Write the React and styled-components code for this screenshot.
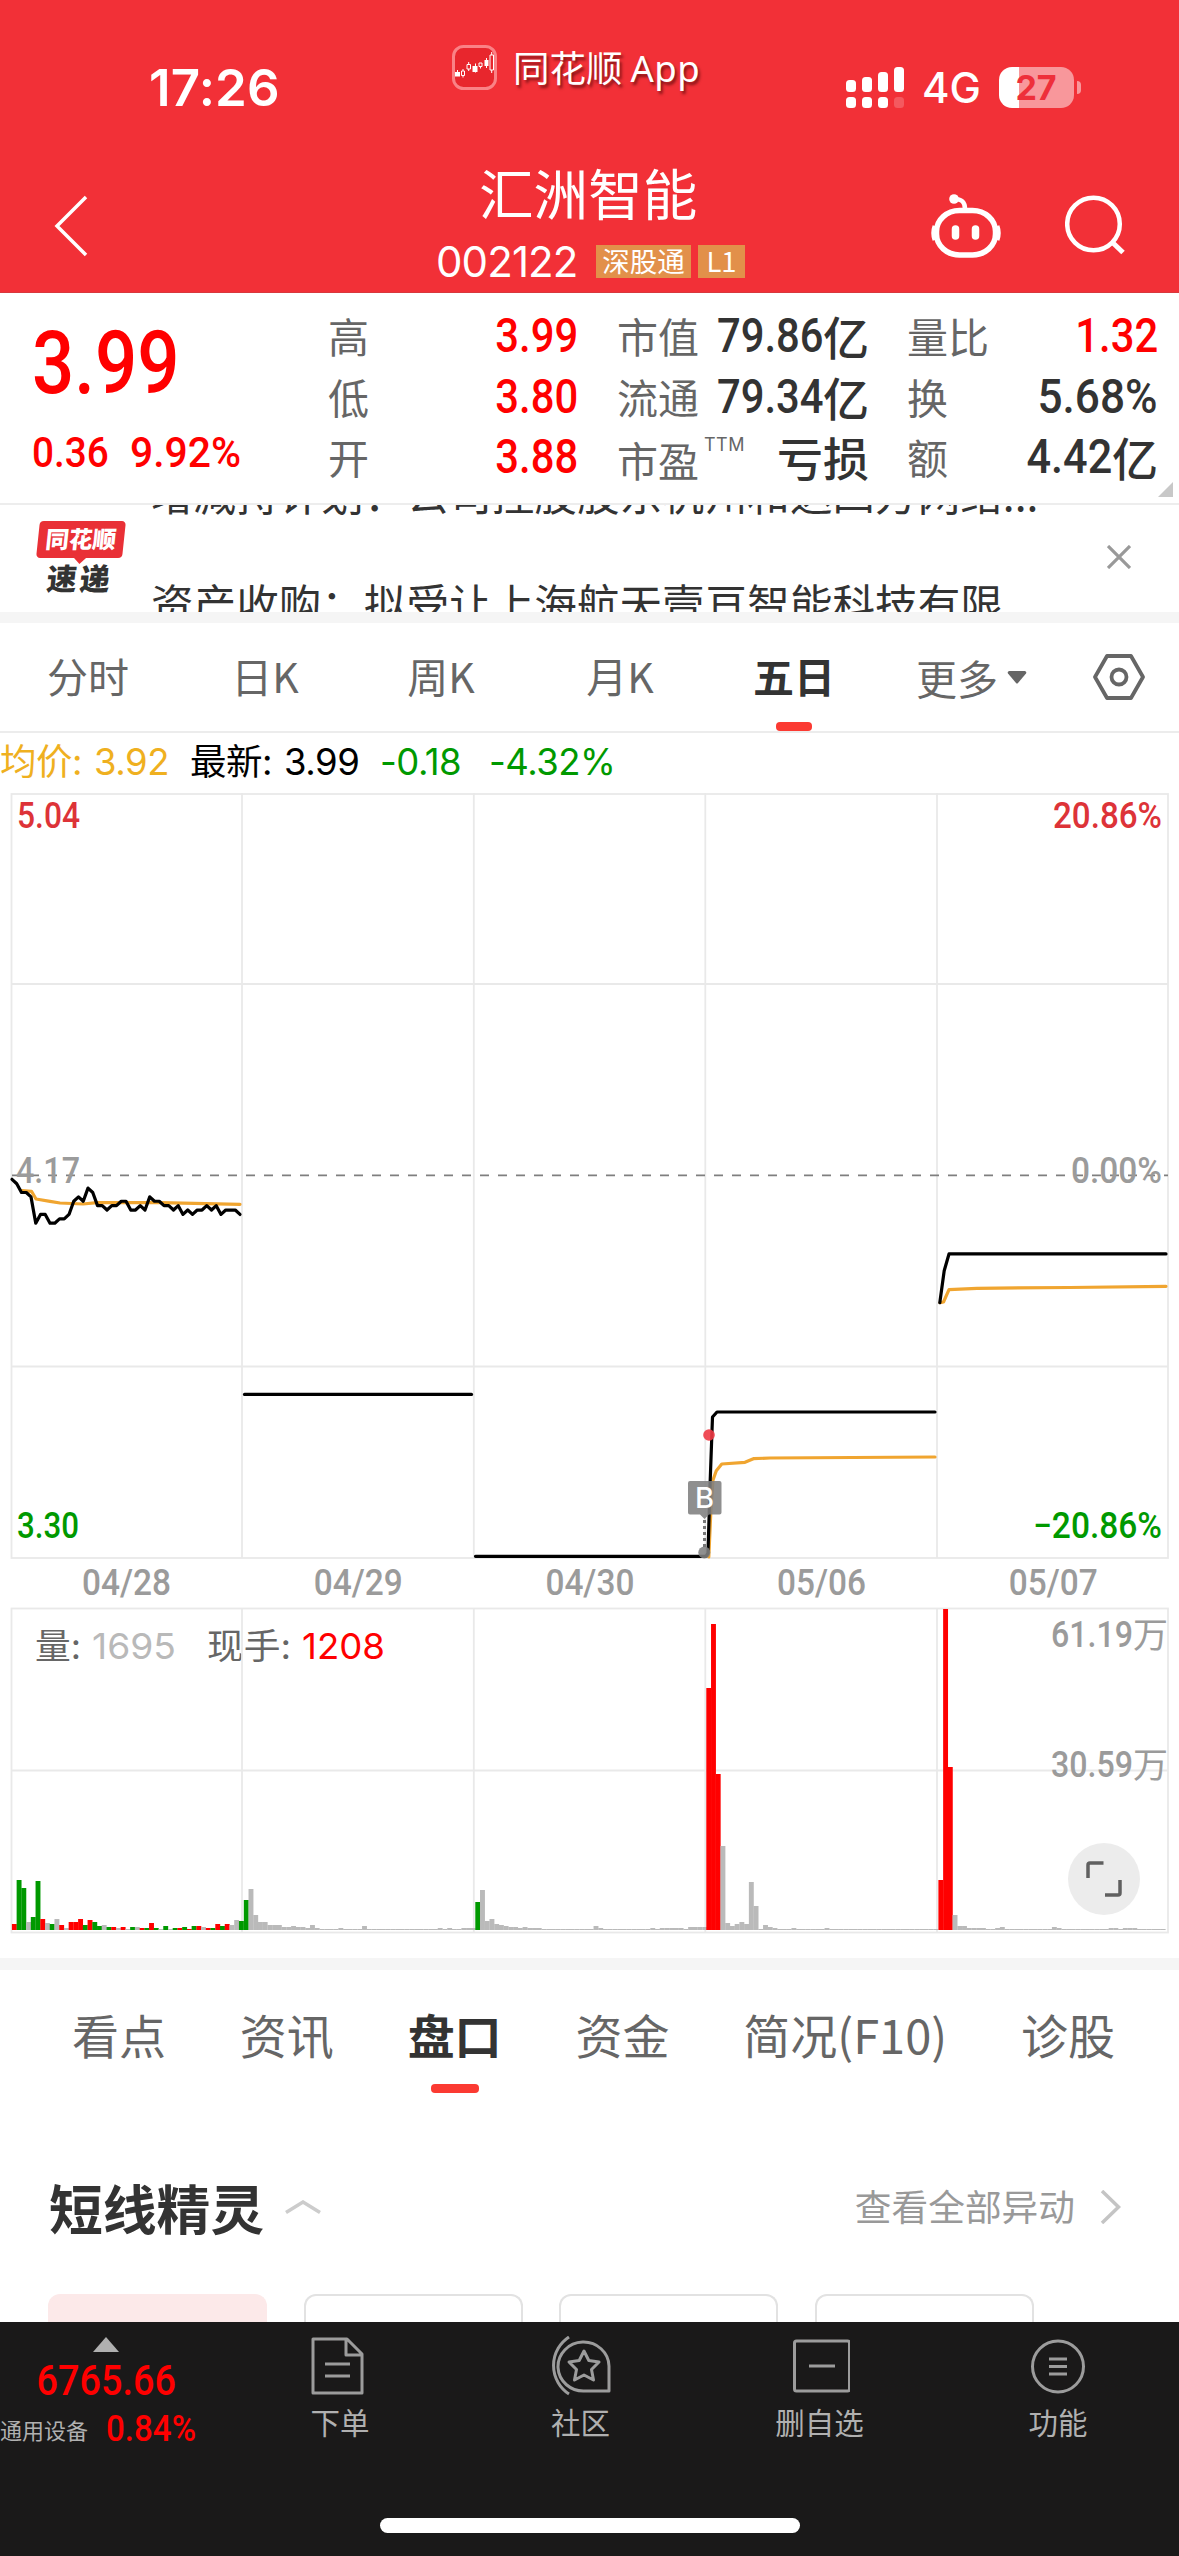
import React, { useState } from 'react'
import styled, { createGlobalStyle } from 'styled-components'

const RED = '#ff0000'
const GREEN = '#009900'
const AVG = '#f0a530'

const periods = [
  { name: '分时', left: 47, width: 82 },
  { name: '日K', left: 230, width: 70 },
  { name: '周K', left: 405, width: 72 },
  { name: '月K', left: 584, width: 72 },
  { name: '五日', left: 753, width: 82 },
]

const sections = ['看点', '资讯', '盘口', '资金', '简况(F10)', '诊股']

// one value for every 5 minutes, in cents
const firstDay = [
  416, 415, 413, 413, 412, 406, 408, 408, 406, 406, 407, 407, 408, 411, 412, 411, 414, 413, 410, 410,
  409, 410, 410, 411, 411, 409, 409, 410, 409, 412, 411, 411, 410, 410, 409, 410, 408, 409, 408, 409,
  409, 410, 409, 410, 408, 409, 409, 409, 408,
]

// r = up, g = down, n = flat
const volumes = [
  {
    x: 11.9,
    bars: 'r6 g50 g42 n8 g13 g49 r11 n7 g6 n11 r5 n2 r8 r8 r11 g5 r10 g8 g4 n5 g3 r3 n2 r3 n1 g3 n3 r2 g2 r7 g2 n1 g4 n1 g2 r2 g3 r1 g4 r4 n3 r2 g2 r6 g4 r6 n5 n10 g9',
  },
  {
    x: 243.8,
    bars: 'g30 n41 n15 n8 n8 n5 n5 n5 n3 n3 n4 n3 n3 n2 n5 n2 n1 n1 n1 n1 n2 n1 n1 n1 n1 n4 n1 n1 n1 n1 n1 n1 n1 n1 n1 n1 n1 n1 n1 n1 n1 n2 n1 n2 n1 n1 n2 n2 n2',
  },
  {
    x: 475.3,
    bars: 'g28 n40 n9 n11 n6 n5 n4 n3 n3 n2 n3 n2 n2 n2 n1 n1 n1 n1 n1 n1 n1 n1 n1 n1 n1 n4 n2 n1 n1 n1 n1 n1 n1 n1 n1 n1 n1 n2 n1 n2 n2 n2 n2 n2 n1 n3 n3 n3 n3',
  },
  {
    x: 706.3,
    bars: 'r242 r306 r156 n84 n7 n4 n6 n8 n6 n48 n24 n1 n5 n3 n2 n1 n1 n1 n2 n1 n1 n1 n1 n1 n1 n2 n1 n1 n1 n1 n1 n1 n1 n1 n1 n1 n1 n1 n1 n1 n1 n1 n1 n1 n1 n1 n1 n1 n1',
  },
  {
    x: 938.4,
    bars: 'r50 r321 r163 n15 n4 n4 n2 n2 n2 n2 n1 n1 n2 n3 n1 n1 n1 n1 n1 n1 n1 n1 n1 n1 n3 n2 n1 n1 n1 n1 n1 n1 n1 n1 n1 n1 n2 n2 n1 n2 n2 n2 n1 n1 n1 n1 n1 n1',
  },
]

const barColors = { r: RED, g: GREEN, n: '#bababa' }
const dates = ['04/28', '04/29', '04/30', '05/06', '05/07']
const dayLines = [242, 473.8, 705.3, 937]
const priceY = (cents) => (504 - cents) * 4.39

function PriceChart() {
  const first = firstDay.map((p, i) => `${12 + i * 4.75},${priceY(p)}`).join(' ')
  return (
    <ChartSvg viewBox="0 0 1179 810" height="810">
      <g stroke="#e9e9e9" strokeWidth="1.8" fill="none">
        <rect x="11.5" y="1" width="1156.5" height="764" />
        <path d="M11 191H1168M11 573.5H1168" />
        {dayLines.map((x) => <path key={x} d={`M${x} 0V765`} />)}
      </g>
      <path d="M12 382.3H1168" stroke="#7f7f7f" strokeWidth="1.8" strokeDasharray="9 9" />

      <AxisText x="17" y="35" textLength="63" fill="#dd3338">5.04</AxisText>
      <AxisText x="1053" y="35" textLength="109" fill="#dd3338">20.86%</AxisText>
      <AxisText x="16" y="389.5" textLength="64" fill="#9b9b9b">4.17</AxisText>
      <AxisText x="1071" y="389.5" textLength="91" fill="#9b9b9b">0.00%</AxisText>
      <AxisText x="17" y="744.5" textLength="62" fill={GREEN}>3.30</AxisText>
      <AxisText x="1033" y="744.5" textLength="129" fill={GREEN}>−20.86%</AxisText>

      <g fill="none" strokeWidth="3.2" strokeLinejoin="round" strokeLinecap="round">
        <g stroke={AVG}>
          <path d="M22 397.7L31.5 398.3L36 406L50 408.3L60 410L83 411L97 409.7H160L240 411.3" />
          <path d="M708.8 764L711 715L713 687L716.3 677.7L721.8 671L745 669.3L753.4 665.7L770 665L935 664" />
          <path d="M940 509.7L943.5 509L949 496.7L977 495.3L1070 494.5L1166 493.3" />
        </g>
        <g stroke="#000">
          <polyline points={first} />
          <path d={`M244.5 ${priceY(367)}H471.5`} />
          <path d={`M475.5 ${priceY(330) - 0.5}H706L708 760L710 693L712.5 624L717 ${priceY(363)}H935`} />
          <path d={`M939.8 509.7L944.2 477.7L949 ${priceY(399)}H1166`} />
        </g>
      </g>

      <circle cx="709" cy="642" r="5.8" fill="#ee3a45" opacity="0.9" />
      <g fill="#808080" fillOpacity="0.88">
        <path d="M690 688H719.5Q721.5 688 721.5 690V719.5Q721.5 721.5 719.5 721.5H709L704.5 726L700 721.5H690Q688 721.5 688 719.5V690Q688 688 690 688Z" />
        <circle cx="704.3" cy="759.5" r="6" />
      </g>
      <path d="M704.5 727V754" stroke="#777" strokeWidth="3" strokeDasharray="3 3" />
      <MarkText x="704.5" y="715">B</MarkText>

      {dates.map((d, i) => (
        <AxisText key={d} x={82 + i * 231.7} y="801.5" textLength="89" fill="#9b9b9b">{d}</AxisText>
      ))}
    </ChartSvg>
  )
}

function VolumeChart() {
  return (
    <ChartSvg viewBox="0 0 1179 355" height="355">
      <g stroke="#e9e9e9" strokeWidth="1.8" fill="none">
        <rect x="11.5" y="5.5" width="1156.5" height="324" />
        <path d="M11 167.5H1168" />
      </g>
      <LegendText x="35" y="56" textLength="46" fill="#666">量:</LegendText>
      <LegendText x="92" y="56" textLength="84" fill="#b9b9b9">1695</LegendText>
      <LegendText x="207" y="56" textLength="84" fill="#666">现手:</LegendText>
      <LegendText x="302" y="56" textLength="83" fill={RED}>1208</LegendText>
      <g stroke="#e9e9e9" strokeWidth="1.8">
        {dayLines.map((x) => <path key={x} d={`M${x} 5V330`} />)}
      </g>
      {volumes.map((day) =>
        day.bars.split(' ').map((bar, i) => {
          const h = Number(bar.slice(1))
          return (
            <rect
              key={`${day.x}-${i}`}
              x={day.x + i * 4.73}
              y={327 - h}
              width="4.9"
              height={h}
              fill={barColors[bar[0]]}
            />
          )
        })
      )}
      <AxisText x="1051" y="44" textLength="82" fill="#9b9b9b">61.19</AxisText>
      <UnitText x="1133" y="45" fill="#9b9b9b">万</UnitText>
      <AxisText x="1051" y="174" textLength="82" fill="#9b9b9b">30.59</AxisText>
      <UnitText x="1133" y="175" fill="#9b9b9b">万</UnitText>
    </ChartSvg>
  )
}

function StatusBar() {
  return (
    <Status>
      <Clock>17:26</Clock>
      <AppMark>
        <svg width="45" height="45" viewBox="0 0 45 45">
          <rect x="1.5" y="1.5" width="42" height="42" rx="10" fill="#e8262d" stroke="#fa8286" strokeWidth="3" />
          <g fill="#fff">
            <rect x="3" y="27" width="5" height="4.5" />
            <path d="M5 25h1v2h-1zM23 18.5h1v9h-1zM34 13h1v10h-1z" />
            <rect x="20.5" y="21" width="5" height="6" />
            <rect x="32.5" y="15" width="4" height="6" />
          </g>
          <g fill="none" stroke="#fff" strokeWidth="1">
            <path d="M9.5 26h3v4.5h-3zM11 24v2M11 30.5v2M15 19.5h3.5v4.5h-3.5zM16.7 17v2.5M16.7 24v2M27 18h3v3.5h-3zM28.5 21.5v2M38 10h3.5v15h-3.5zM39.7 7v3M39.7 25v3" />
          </g>
        </svg>
        <AppName>同花顺<span>App</span></AppName>
      </AppMark>
      <Signal>
        <svg width="58" height="41" viewBox="0 0 58 41" fill="#fff">
          <rect x="0" y="13" width="10" height="12" rx="3.5" />
          <rect x="16" y="10" width="10" height="15" rx="3.5" />
          <rect x="32" y="5" width="10" height="20" rx="3.5" />
          <rect x="48" y="0" width="10" height="25" rx="3.5" />
          <rect x="0" y="30" width="10" height="11" rx="3.5" />
          <rect x="16" y="30" width="10" height="11" rx="3.5" />
          <rect x="32" y="30" width="10" height="11" rx="3.5" />
          <rect x="48" y="30" width="10" height="11" rx="3.5" opacity="0.2" />
        </svg>
        <Network>4G</Network>
        <Battery>27</Battery>
        <BatteryTip />
      </Signal>
    </Status>
  )
}

function NavBar() {
  return (
    <Nav>
      <svg width="36" height="62" viewBox="0 0 36 62" fill="none" stroke="#fff" strokeWidth="3.5">
        <path d="M34 2L5 31L34 60" />
      </svg>
      <Title>
        <h1>汇洲智能</h1>
        <CodeRow>
          <Code>002122</Code>
          <Tag $width={95}>深股通</Tag>
          <Tag $width={47}>L1</Tag>
        </CodeRow>
      </Title>
      <NavIcons>
        <svg width="70" height="64" viewBox="0 0 70 64" fill="none" stroke="#fff" strokeWidth="5">
          <rect x="5.5" y="16.5" width="59" height="44.5" rx="23" ry="21" strokeWidth="5.5" />
          <path d="M23 5C31 5 34 8 34 15" strokeWidth="4.5" />
          <circle cx="23" cy="5" r="4.8" fill="#fff" stroke="none" />
          <path d="M4 32Q1.5 39 4 46M66 32Q68.5 39 66 46" strokeWidth="5" />
          <path d="M24.5 35V42M44.5 35V42" strokeWidth="7.5" strokeLinecap="round" />
        </svg>
        <svg width="62" height="62" viewBox="0 0 62 62" fill="none" stroke="#fff" strokeWidth="4.5">
          <circle cx="28.5" cy="30" r="26.3" />
          <path d="M47 48L58 58.5" strokeWidth="5" />
        </svg>
      </NavIcons>
    </Nav>
  )
}

function Quote() {
  return (
    <QuotePanel>
      <Last>
        <Din $size={87} $squeeze={0.855} $color={RED}>3.99</Din>
        <Change>
          <Din $size={43} $squeeze={0.9} $color={RED}>0.36</Din>
          <Din $size={43} $squeeze={0.95} $color={RED}>9.92%</Din>
        </Change>
      </Last>
      <StatColumn $width={250}>
        <Stat>高<Din $end $color={RED}>3.99</Din></Stat>
        <Stat>低<Din $end $color={RED}>3.80</Din></Stat>
        <Stat>开<Din $end $color={RED}>3.88</Din></Stat>
      </StatColumn>
      <StatColumn $width={252} $left={39}>
        <Stat>市值<Value><Din $end>79.86</Din>亿</Value></Stat>
        <Stat>流通<Value><Din $end>79.34</Din>亿</Value></Stat>
        <Stat><Pe>市盈<sup>TTM</sup></Pe><Value>亏损</Value></Stat>
      </StatColumn>
      <StatColumn $width={251} $left={38}>
        <Stat>量比<Din $end $color={RED}>1.32</Din></Stat>
        <Stat>换<Din $end $squeeze={0.92}>5.68%</Din></Stat>
        <Stat>额<Value><Din $end $squeeze={0.9}>4.42</Din>亿</Value></Stat>
      </StatColumn>
      <Corner />
    </QuotePanel>
  )
}

function News() {
  return (
    <NewsBar>
      <Express>
        <ExpressBadge><b>同花顺</b></ExpressBadge>
        <ExpressName>速递</ExpressName>
      </Express>
      <Ticker>
        <p>增减持计划：公司控股股东杭州和达四方网络...</p>
        <p>资产收购：拟受让上海航天壹亘智能科技有限</p>
      </Ticker>
      <svg width="24" height="24" viewBox="0 0 24 24" stroke="#999" strokeWidth="3.2">
        <path d="M1 1L23 23M23 1L1 23" />
      </svg>
    </NewsBar>
  )
}

function BottomBar() {
  return (
    <Bottom>
      <Index>
        <svg width="26" height="15" viewBox="0 0 26 15" fill="#b0b0b0"><path d="M13 0L26 15H0Z" /></svg>
        <Din $size={42.5} $squeeze={0.89} $center $color={RED}>6765.66</Din>
        <IndexRow>
          通用设备
          <Din $size={36} $squeeze={0.92} $color={RED}>0.84%</Din>
        </IndexRow>
      </Index>
      <Action $center={340}>
        <svg width="60" height="60" viewBox="0 0 60 60">
          <path d="M3 3H37L52 18V57H3ZM36 3V19H52M15 28H40M15 40H40" />
        </svg>
        下单
      </Action>
      <Action $center={580.5}>
        <svg width="60" height="60" viewBox="0 0 60 60">
          <path d="M58 55H34A25.5 24.5 0 1 1 58 30ZM18 1A34 34 0 0 0 18 58" />
          <path d="M33 15L37.8 24.5L48 26L40.5 33.5L42.5 44L33 39L23.5 44L25.5 33.5L18 26L28.2 24.5Z" />
        </svg>
        社区
      </Action>
      <Action $center={819.5}>
        <svg width="60" height="60" viewBox="0 0 60 60">
          <rect x="4.5" y="5" width="55" height="50" rx="2" />
          <path d="M19 30H45" />
        </svg>
        删自选
      </Action>
      <Action $center={1058}>
        <svg width="60" height="60" viewBox="0 0 60 60">
          <circle cx="30" cy="30.5" r="25.5" />
          <path d="M21 23H39M21 30.5H39M21 38H39" />
        </svg>
        功能
      </Action>
      <HomeIndicator />
    </Bottom>
  )
}

function App() {
  const [period, setPeriod] = useState('五日')
  const [section, setSection] = useState('盘口')

  return (
    <Page>
      <GlobalStyle />
      <Header>
        <StatusBar />
        <NavBar />
      </Header>
      <Quote />
      <News />
      <Band $height={11} />
      <Periods>
        {periods.map((p, i) => {
          const prev = periods[i - 1]
          return (
            <Period
              key={p.name}
              $gap={prev ? p.left - prev.left - prev.width : p.left}
              $width={p.width}
              $active={p.name === period}
              onClick={() => setPeriod(p.name)}
            >
              {p.name}
            </Period>
          )
        })}
        <More>
          更多
          <svg width="20" height="13" viewBox="0 0 20 13" fill="#666"><path d="M2 0H18Q20 1 19 2.5L11 12Q10 13 9 12L1 2.5Q0 1 2 0Z" /></svg>
        </More>
        <svg width="52" height="46" viewBox="0 0 52 46" fill="none" stroke="#666" strokeWidth="3.8" strokeLinejoin="round">
          <path d="M14 2H38L50 23L38 44H14L2 23Z" />
          <circle cx="26" cy="23" r="7.5" />
        </svg>
      </Periods>
      <Info>
        <InfoItem $width={94} $color="#efb01f">均价:</InfoItem>
        <InfoItem $width={96} $color="#efb01f">3.92</InfoItem>
        <InfoItem $width={94} $color="#000">最新:</InfoItem>
        <InfoItem $width={96} $color="#000">3.99</InfoItem>
        <InfoItem $width={109} $color={GREEN}>-0.18</InfoItem>
        <InfoItem $width={130} $color={GREEN}>-4.32%</InfoItem>
      </Info>
      <PriceChart />
      <VolumeArea>
        <VolumeChart />
        <Expand>
          <svg width="36" height="36" viewBox="0 0 36 36" fill="none" stroke="#606060" strokeWidth="3.5">
            <path d="M17.5 2H4Q2 2 2 4V17M19 34H32Q34 34 34 32V19" />
          </svg>
        </Expand>
      </VolumeArea>
      <Band $height={12} />
      <Sections>
        {sections.map((s) => (
          <Section key={s} $active={s === section} onClick={() => setSection(s)}>{s}</Section>
        ))}
      </Sections>
      <Heading>
        <h2>短线精灵</h2>
        <svg width="36" height="14" viewBox="0 0 36 14" fill="none" stroke="#ccc" strokeWidth="3.5"><path d="M1 12.5L18 2L35 12.5" /></svg>
        <AllLink>查看全部异动</AllLink>
        <svg width="22" height="34" viewBox="0 0 22 34" fill="none" stroke="#c4c4c4" strokeWidth="3.5"><path d="M2 1L18.5 17L2 33" /></svg>
      </Heading>
      <Cards>
        <Card $active />
        <Card />
        <Card />
        <Card />
      </Cards>
      <BottomBar />
    </Page>
  )
}

export default App

const GlobalStyle = createGlobalStyle`
  * {
    box-sizing: border-box;
  }
  body {
    margin: 0;
    background: #fff;
  }
  h1, h2, p {
    margin: 0;
    font-weight: 400;
  }
  svg {
    display: block;
    flex-shrink: 0;
  }
`

const Page = styled.div`
  width: 1179px;
  height: 2556px;
  overflow: hidden;
  display: flex;
  flex-direction: column;
  font-family: "Noto Sans CJK SC", sans-serif;
  color: #333;
  white-space: nowrap;

  > * {
    flex-shrink: 0;
  }
`

const Din = styled.span`
  display: inline-block;
  font-family: Roboto, sans-serif;
  font-weight: 500;
  font-size: ${(p) => p.$size || 48}px;
  line-height: 1;
  color: ${(p) => p.$color || '#333'};
  transform: scaleX(${(p) => p.$squeeze || 0.87});
  transform-origin: ${(p) => (p.$end ? 'right' : p.$center ? 'center' : 'left')};
`

const Header = styled.header`
  height: 293px;
  background: #f23037;
  border-bottom: 1px solid #d8383d;
  color: #fff;
`

const Status = styled.div`
  height: 160px;
  display: flex;
  align-items: flex-start;
`

const Clock = styled.div`
  width: 301px;
  margin-top: 63px;
  padding-left: 149px;
  font: 600 51px/50px Inter, sans-serif;
  letter-spacing: 0.2px;
`

const AppMark = styled.div`
  width: 394px;
  margin: 45px 0 0 151px;
  display: flex;
  gap: 16px;
`

const AppName = styled.div`
  font-size: 36.5px;
  line-height: 43px;
  text-shadow: 2px 3px 3px rgba(60, 0, 0, 0.6);

  span {
    margin-left: 8px;
    font-family: "Noto Sans", sans-serif;
    letter-spacing: 0.5px;
  }
`

const Signal = styled.div`
  margin-top: 67px;
  display: flex;
  align-items: center;
`

const Network = styled.div`
  width: 77px;
  margin-left: 18px;
  font: 500 42px/41px Inter, sans-serif;
`

const Battery = styled.div`
  width: 75px;
  height: 41px;
  border-radius: 13px;
  background: linear-gradient(90deg, #fff 20px, #f8979b 20px);
  color: #ee2f3a;
  font: 700 34px/42px Inter, sans-serif;
  text-align: center;
  padding-right: 1px;
`

const BatteryTip = styled.div`
  width: 4px;
  height: 13px;
  margin-left: 3px;
  border-radius: 0 8px 8px 0;
  background: #f8979b;
`

const Nav = styled.nav`
  height: 132px;
  padding: 4px 53px 0 52px;
  display: grid;
  grid-template-columns: 290px 1fr 195px;

  > svg {
    margin-top: 31px;
  }
`

const Title = styled.div`
  padding-left: 94px;

  h1 {
    padding-left: 43px;
    font-size: 54.6px;
    line-height: 54px;
    margin-top: 1px;
  }
`

const CodeRow = styled.div`
  margin-top: 26px;
  height: 33px;
  display: flex;
  align-items: center;
  gap: 7px;
`

const Code = styled.div`
  width: 153px;
  font: 400 42px/33px Inter, sans-serif;
  letter-spacing: -0.9px;
`

const Tag = styled.div`
  width: ${(p) => p.$width}px;
  height: 33px;
  background: #e2904a;
  font-size: 27.5px;
  line-height: 30px;
  text-align: center;
`

const NavIcons = styled.div`
  display: flex;
  gap: 64px;
  padding-top: 30px;
`

const QuotePanel = styled.section`
  height: 212px;
  border-bottom: 2px solid #ededed;
  display: flex;
  position: relative;
`

const Last = styled.div`
  width: 328px;
  padding: 27px 0 0 32px;
`

const Change = styled.div`
  display: flex;
  gap: 13px;
  margin-top: 24px;
`

const StatColumn = styled.div`
  width: ${(p) => p.$width}px;
  margin-left: ${(p) => p.$left || 0}px;
  padding-top: 12px;
`

const Stat = styled.div`
  height: 60.5px;
  display: flex;
  align-items: center;
  justify-content: space-between;
  color: #666;
  font-size: 41px;
  line-height: 60px;

  ${Din} {
    margin-top: 2px;
  }
`

const Value = styled.span`
  display: flex;
  align-items: center;
  color: #333;
  font-size: 46px;
  font-weight: 500;
  line-height: 58px;
`

const Pe = styled.span`
  display: flex;
  padding-top: 6px;

  sup {
    margin-left: 5px;
    font: 400 18px/20px Inter, sans-serif;
    letter-spacing: 0.5px;
    padding-top: 6px;
  }
`

const Corner = styled.div`
  position: absolute;
  right: 6px;
  bottom: 6px;
  border-left: 15px solid transparent;
  border-bottom: 15px solid #c8c8c8;
`

const NewsBar = styled.section`
  height: 107px;
  padding: 0 48px 4px 0;
  display: flex;
  align-items: center;
  overflow: hidden;
`

const Express = styled.div`
  width: 151px;
  padding-left: 38px;
`

const ExpressBadge = styled.div`
  width: 86px;
  height: 37px;
  border-radius: 4px;
  background: #e93036;
  color: #fff;
  transform: skewX(-6deg);
  text-align: center;
  font-size: 23.5px;
  line-height: 35px;
  position: relative;

  b {
    font-weight: 900;
  }

  &::after {
    content: "";
    position: absolute;
    left: 38px;
    top: 37px;
    border: 6px solid transparent;
    border-top-color: #e93036;
    border-bottom: 0;
  }
`

const ExpressName = styled.div`
  margin: 4px 0 0 9px;
  font-size: 30px;
  font-weight: 900;
  line-height: 30px;
  letter-spacing: 3px;
  transform: skewX(-6deg);
`

const Ticker = styled.div`
  flex: 1;
  align-self: flex-start;
  margin-top: -34px;
  font-size: 42.6px;

  p {
    line-height: 43px;
    margin-bottom: 66px;
  }
`

const Band = styled.div`
  height: ${(p) => p.$height}px;
  background: #f5f5f5;
`

const Periods = styled.nav`
  height: 110px;
  border-bottom: 2px solid #ececec;
  display: flex;
  align-items: center;
  font-size: 41px;
  color: #666;
`

const underline = (width) => `
  content: "";
  position: absolute;
  bottom: 0;
  left: 50%;
  width: ${width}px;
  margin-left: -${width / 2}px;
  height: 9px;
  border-radius: 4px;
  background: #fb3a32;
`

const Period = styled.div`
  width: ${(p) => p.$width}px;
  height: 108px;
  margin-left: ${(p) => p.$gap}px;
  line-height: 104px;
  text-align: center;
  position: relative;
  font-weight: ${(p) => (p.$active ? 700 : 400)};
  color: ${(p) => (p.$active ? '#333' : '#666')};

  &::after {
    ${(p) => p.$active && underline(36)}
  }
`

const More = styled.div`
  width: 177px;
  margin-left: 81px;
  line-height: 104px;
  display: flex;
  align-items: center;
  gap: 9px;
`

const Info = styled.div`
  height: 60px;
  display: flex;
  font-family: Inter, "Noto Sans CJK SC", sans-serif;
  font-size: 36.5px;
  line-height: 58px;
`

const InfoItem = styled.div`
  width: ${(p) => p.$width}px;
  color: ${(p) => p.$color};
  letter-spacing: -0.5px;
`

const ChartSvg = styled.svg`
  width: 1179px;
`

const AxisText = styled.text.attrs({ lengthAdjust: 'spacingAndGlyphs' })`
  font-family: Roboto, sans-serif;
  font-size: 36px;
  font-weight: 500;
`

const UnitText = styled.text`
  font-family: "Noto Sans CJK SC", sans-serif;
  font-size: 35px;
`

const LegendText = styled.text.attrs({ lengthAdjust: 'spacingAndGlyphs' })`
  font-family: Inter, "Noto Sans CJK SC", sans-serif;
  font-size: 35.5px;
`

const MarkText = styled.text`
  font-family: Inter, sans-serif;
  font-size: 29px;
  font-weight: 500;
  fill: #fff;
  text-anchor: middle;
`

const VolumeArea = styled.div`
  position: relative;
`

const Expand = styled.div`
  position: absolute;
  right: 39px;
  bottom: 43px;
  width: 72px;
  height: 72px;
  border-radius: 50%;
  background: #ececec;
  display: flex;
  align-items: center;
  justify-content: center;
`

const Sections = styled.nav`
  height: 150px;
  padding: 0 64px 0 72px;
  display: flex;
  justify-content: space-between;
`

const Section = styled.div`
  height: 123px;
  line-height: 127px;
  font-size: 47px;
  position: relative;
  font-weight: ${(p) => (p.$active ? 700 : 400)};
  color: ${(p) => (p.$active ? '#333' : '#666')};

  &::after {
    ${(p) => p.$active && underline(48)}
  }
`

const Heading = styled.div`
  height: 174px;
  padding: 0 57px 0 49px;
  display: flex;
  align-items: center;

  h2 {
    margin-right: 21px;
    font-size: 53.8px;
    font-weight: 700;
    line-height: 172px;
  }
`

const AllLink = styled.div`
  margin: -4px 25px 0 auto;
  font-size: 36.7px;
  color: #999;
`

const Cards = styled.div`
  height: 28px;
  padding-left: 48px;
  display: flex;
  gap: 36.5px;
`

const Card = styled.div`
  width: 219px;
  height: 28px;
  border-radius: 12px 12px 0 0;
  border: 2px solid ${(p) => (p.$active ? '#fce9e9' : '#e2e2e2')};
  border-bottom: 0;
  background: ${(p) => (p.$active ? '#fce9e9' : '#fff')};
`

const Bottom = styled.footer`
  height: 235px;
  background: #1a1919;
  color: #b0b0b0;
  position: relative;
`

const Index = styled.div`
  position: absolute;
  left: 0;
  top: 15px;
  width: 212px;
  display: flex;
  flex-direction: column;
  align-items: center;
  gap: 8px;
`

const IndexRow = styled.div`
  width: 212px;
  display: flex;
  align-items: center;
  gap: 18px;
  font-size: 22px;
  line-height: 36px;
`

const Action = styled.div`
  position: absolute;
  left: ${(p) => p.$center - 60}px;
  top: 14px;
  width: 120px;
  display: flex;
  flex-direction: column;
  align-items: center;
  font-size: 29.5px;
  line-height: 51px;

  svg {
    fill: none;
    stroke: #9c9c9c;
    stroke-width: 3px;
    stroke-linejoin: round;
  }
`

const HomeIndicator = styled.div`
  position: absolute;
  left: 380px;
  bottom: 24px;
  width: 420px;
  height: 15px;
  border-radius: 8px;
  background: #fff;
`
